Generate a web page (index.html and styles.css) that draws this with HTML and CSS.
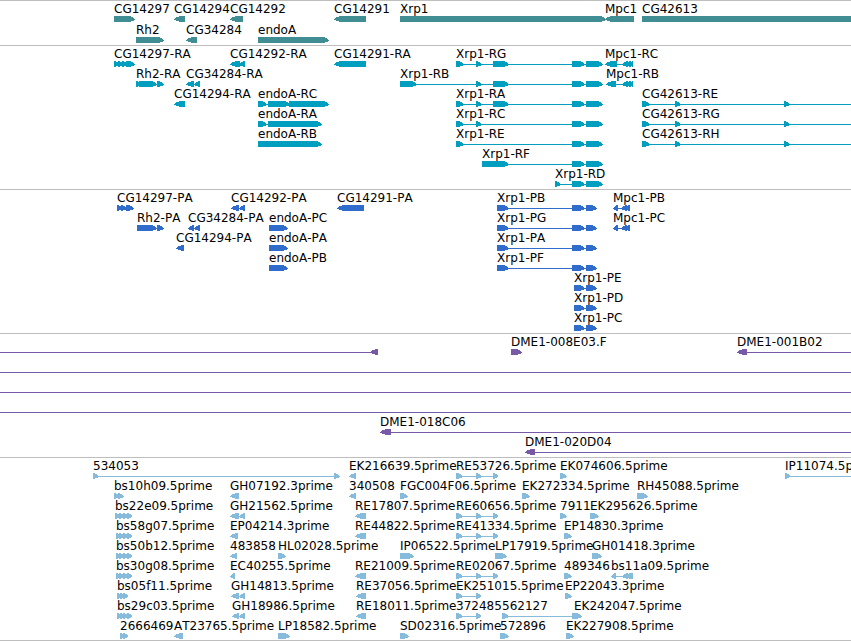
FILE: index.html
```html
<!DOCTYPE html>
<html lang="en">
<head>
  <meta charset="UTF-8">
  <title>Genome Browser</title>
  <link rel="stylesheet" href="styles.css">
</head>
<body>

<main id="browser"></main>

<script src="tracks.js"></script>
</body>
</html>
```

FILE: styles.css
```css
body {
  margin: 0;
  background: #fff;
  color: #000;
  font-family: "DejaVu Sans", Verdana, sans-serif;
  font-size: 12px;
  line-height: 14px;
  font-kerning: none;
}
#browser {
  border-bottom: 1px solid #bebebe;
}
.track {
  display: flex;
  flex-direction: column;
  padding: 1px 0 2px;
  border-top: 1px solid #bebebe;
  overflow: hidden;
}
.track:last-child {
  padding-bottom: 1px;
}
.row {
  position: relative;
  height: 20px;
}
/* features sit at their place on the sequence axis */
.feature {
  position: absolute;
  top: 0;
  display: flex;
  flex-direction: column;
  white-space: nowrap;
}
.label {
  height: 14px;
}
.glyph {
  display: block;
  height: 6px;
  fill: currentColor;
  shape-rendering: crispEdges;
}
.genes {
  gap: 1px;
}
.genes .glyph {
  color: #408e94;
}
.transcripts .glyph {
  color: #009fc0;
}
.proteins .glyph {
  color: #306ccc;
}
.clones .glyph {
  color: #7759a8;
}
.ests .glyph {
  color: #86bbdc;
}
```

FILE: tracks.js
```javascript
const SVG = 'http://www.w3.org/2000/svg';
const END = 2600;   // features running off the right side of the view
const TIP = 6;      // length of the arrow head

const tail = [[572, 585], [586, 603]];
const codingTail = [[572, 585], [586, 597]];
const re = [[456, 463], [476, 482], [493, 498]];
const cg42613 = [[642, 650], [675, 681], [784, 790]];

// feature: [name, strand, blocks, line start, line end]
const tracks = [
  { type: 'genes', title: 'Genes', rows: [
    [
      ['CG14297', 1, [[114, 135]]],
      ['CG14294', -1, [[174, 185]]],
      ['CG14292', -1, [[230, 243]]],
      ['CG14291', -1, [[334, 366]]],
      ['Xrp1', 1, [[400, 606]]],
      ['Mpc1', -1, [[605, 634]]],
      ['CG42613', 1, [[642, END]]]
    ],
    [
      ['Rh2', 1, [[136, 164]]],
      ['CG34284', -1, [[186, 197]]],
      ['endoA', 1, [[258, 329]]]
    ]
  ]},
  { type: 'transcripts', title: 'Transcripts', rows: [
    [
      ['CG14297-RA', 1, [[114, 119], [118, 123], [122, 127], [126, 135]]],
      ['CG14292-RA', -1, [[230, 240], [239, 245]]],
      ['CG14291-RA', -1, [[334, 366]]],
      ['Xrp1-RG', 1, [[456, 464], [476, 482], [493, 509], ...tail]],
      ['Mpc1-RC', -1, [[605, 617], [622, 628], [627, 631], [630, 633]]]
    ],
    [
      ['Rh2-RA', 1, [[136, 140], [139, 157], [157, 164]]],
      ['CG34284-RA', -1, [[186, 194], [194, 200]]],
      ['Xrp1-RB', 1, [[400, 417], [476, 482], [493, 509], ...tail]],
      ['Mpc1-RB', -1, [[606, 616], [622, 628], [627, 631], [630, 633]]]
    ],
    [
      ['CG14294-RA', -1, [[174, 185]]],
      ['endoA-RC', 1, [[258, 267], [268, 290], [289, 329]]],
      ['Xrp1-RA', 1, [[456, 464], [476, 482], [493, 509], ...tail]],
      ['CG42613-RE', 1, cg42613, 642, END]
    ],
    [
      ['endoA-RA', 1, [[258, 267], [268, 322]]],
      ['Xrp1-RC', 1, [[456, 464], [476, 482], ...tail]],
      ['CG42613-RG', 1, cg42613, 642, END]
    ],
    [
      ['endoA-RB', 1, [[258, 322]]],
      ['Xrp1-RE', 1, [[456, 464], ...tail]],
      ['CG42613-RH', 1, cg42613, 642, END]
    ],
    [
      ['Xrp1-RF', 1, [[482, 509], ...tail]]
    ],
    [
      ['Xrp1-RD', 1, [[555, 561], ...tail]]
    ]
  ]},
  { type: 'proteins', title: 'Proteins', rows: [
    [
      ['CG14297-PA', 1, [[117, 122], [121, 127], [126, 134]]],
      ['CG14292-PA', -1, [[231, 239], [239, 245]]],
      ['CG14291-PA', -1, [[337, 364]]],
      ['Xrp1-PB', 1, [[497, 509], ...codingTail]],
      ['Mpc1-PB', -1, [[613, 618], [621, 627], [626, 630]]]
    ],
    [
      ['Rh2-PA', 1, [[137, 157], [157, 164]]],
      ['CG34284-PA', -1, [[188, 194], [194, 200]]],
      ['endoA-PC', 1, [[269, 288]]],
      ['Xrp1-PG', 1, [[497, 509], ...codingTail]],
      ['Mpc1-PC', -1, [[613, 618], [621, 627], [626, 630]]]
    ],
    [
      ['CG14294-PA', -1, [[176, 184]]],
      ['endoA-PA', 1, [[269, 288]]],
      ['Xrp1-PA', 1, [[497, 509], ...codingTail]]
    ],
    [
      ['endoA-PB', 1, [[269, 288]]],
      ['Xrp1-PF', 1, [[497, 509], ...codingTail]]
    ],
    [['Xrp1-PE', 1, [[574, 585], [586, 597]]]],
    [['Xrp1-PD', 1, [[574, 585], [586, 597]]]],
    [['Xrp1-PC', 1, [[574, 585], [586, 597]]]]
  ]},
  { type: 'clones', title: 'BAC clones', rows: [
    [
      ['', -1, [[370, 378]], 0, 378],
      ['DME1-008E03.F', 1, [[511, 522]]],
      ['DME1-001B02', -1, [[737, 747]], 737, END]
    ],
    [['', 1, [], 0, END]],
    [['', 1, [], 0, END]],
    [['', 1, [], 0, END]],
    [['DME1-018C06', -1, [[380, 391]], 380, END]],
    [['DME1-020D04', -1, [[525, 535]], 525, END]]
  ]},
  { type: 'ests', title: 'ESTs', rows: [
    [
      ['534053', 1, [[93, 99], [334, 340]]],
      ['EK216639.5prime', -1, [[349, 356]]],
      ['RE53726.5prime', 1, re],
      ['EK074606.5prime', 1, [[560, 567]]],
      ['IP11074.5prime', 1, [[785, 790]], 785, END]
    ],
    [
      ['bs10h09.5prime', 1, [[114, 119], [118, 124]]],
      ['GH07192.3prime', -1, [[230, 239]]],
      ['340508', -1, [[349, 356]]],
      ['FGC004F06.5prime', 1, [[400, 408]]],
      ['EK272334.5prime', 1, [[522, 530]]],
      ['RH45088.5prime', 1, [[637, 648]]]
    ],
    [
      ['bs22e09.5prime', 1, [[115, 120], [119, 124], [123, 128], [127, 132]]],
      ['GH21562.5prime', -1, [[230, 239], [239, 245]]],
      ['RE17807.5prime', -1, [[355, 366]]],
      ['RE60656.5prime', 1, re],
      ['7911', 1, [[560, 567]]],
      ['EK295626.5prime', 1, [[590, 599]]]
    ],
    [
      ['bs58g07.5prime', 1, [[116, 120], [119, 124], [123, 128], [127, 132]]],
      ['EP04214.3prime', -1, [[230, 238]]],
      ['RE44822.5prime', -1, [[355, 366]]],
      ['RE41334.5prime', 1, re],
      ['EP14830.3prime', 1, [[564, 572]]]
    ],
    [
      ['bs50b12.5prime', 1, [[116, 120], [119, 124], [123, 128], [127, 132]]],
      ['483858', -1, [[230, 237]]],
      ['HL02028.5prime', 1, [[278, 286]]],
      ['IP06522.5prime', 1, [[400, 414]]],
      ['LP17919.5prime', 1, [[495, 507]]],
      ['GH01418.3prime', 1, [[592, 602]]]
    ],
    [
      ['bs30g08.5prime', 1, [[116, 120], [119, 124], [123, 128], [127, 132]]],
      ['EC40255.5prime', -1, [[230, 235]]],
      ['RE21009.5prime', -1, [[355, 366]]],
      ['RE02067.5prime', 1, re],
      ['489346', 1, [[564, 572]]],
      ['bs11a09.5prime', -1, [[611, 616], [622, 628], [626, 631], [629, 633]]]
    ],
    [
      ['bs05f11.5prime', 1, [[117, 121], [120, 124], [123, 128]]],
      ['GH14813.5prime', -1, [[231, 239], [239, 245]]],
      ['RE37056.5prime', -1, [[356, 366]]],
      ['EK251015.5prime', 1, [[456, 463], [476, 481]]],
      ['EP22043.3prime', 1, [[565, 572]]]
    ],
    [
      ['bs29c03.5prime', 1, [[117, 121], [120, 124], [123, 128], [127, 132]]],
      ['GH18986.5prime', -1, [[232, 239], [239, 245]]],
      ['RE18011.5prime', -1, [[356, 366]]],
      ['372485', 1, [[456, 463], [476, 481]]],
      ['562127', 1, [[502, 509], [572, 577]]],
      ['EK242047.5prime', 1, [[574, 582]]]
    ],
    [
      ['2666469', 1, [[120, 124], [123, 128]]],
      ['AT23765.5prime', -1, [[174, 183]]],
      ['LP18582.5prime', 1, [[278, 290]]],
      ['SD02316.5prime', 1, [[400, 409]]],
      ['572896', 1, [[500, 509]]],
      ['EK227908.5prime', 1, [[566, 574]]]
    ]
  ]}
];

// block with a rounded arrow head on the end it points to
function arrow(start, end, strand) {
  const tip = Math.min(TIP, end - start - 1);
  if (strand > 0) {
    return `M${start} 0H${end - tip}L${end - tip / 2} 1L${end} 3V4L${end - tip / 2} 5L${end - tip} 6H${start}Z`;
  }
  return `M${end} 0H${start + tip}L${start + tip / 2} 1L${start} 3V4L${start + tip / 2} 5L${start + tip} 6H${end}Z`;
}

function addPath(glyph, d) {
  const path = document.createElementNS(SVG, 'path');
  path.setAttribute('d', d);
  glyph.appendChild(path);
}

function createFeature([name, strand, blocks, from, to]) {
  const start = from ?? blocks[0][0];
  const end = to ?? blocks[blocks.length - 1][1];

  const feature = document.createElement('div');
  feature.className = 'feature';
  feature.style.left = start + 'px';

  const label = document.createElement('span');
  label.className = 'label';
  label.textContent = name;
  feature.appendChild(label);

  const glyph = document.createElementNS(SVG, 'svg');
  glyph.setAttribute('class', 'glyph');
  glyph.setAttribute('width', end - start);
  glyph.setAttribute('height', 6);
  glyph.setAttribute('aria-hidden', 'true');
  addPath(glyph, `M0 3H${end - start}V4H0Z`);
  blocks.forEach(([a, b]) => addPath(glyph, arrow(a - start, b - start, strand)));
  feature.appendChild(glyph);
  return feature;
}

const browser = document.getElementById('browser');
tracks.forEach(track => {
  const section = document.createElement('section');
  section.className = 'track ' + track.type;
  section.setAttribute('aria-label', track.title);
  track.rows.forEach(features => {
    const row = document.createElement('div');
    row.className = 'row';
    features.forEach(f => row.appendChild(createFeature(f)));
    section.appendChild(row);
  });
  browser.appendChild(section);
});
```
